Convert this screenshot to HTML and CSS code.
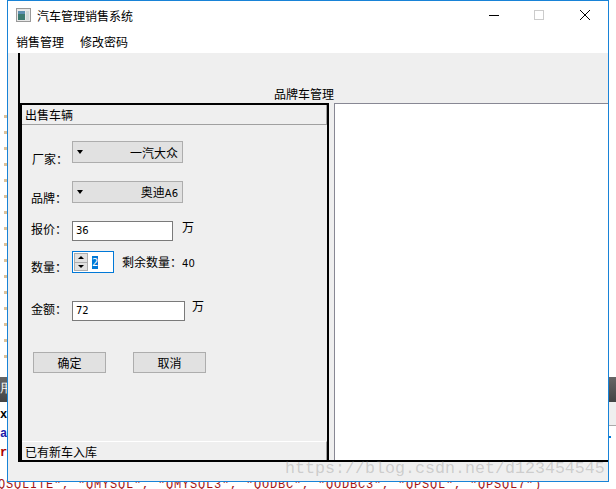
FILE: index.html
```html
<!DOCTYPE html>
<html lang="zh">
<head>
<meta charset="utf-8">
<title>汽车管理销售系统</title>
<link rel="stylesheet" href="styles.css">
</head>
<body>
<div class="desktop">
  <div class="bg-ticks"></div>
  <div class="bg-strip">
    <span class="bg-dark">用</span>
    <span class="bg-x">x</span>
    <span class="bg-blue">a</span>
    <span class="bg-red">r</span>
  </div>
  <div class="bg-code">QSQLITE", "QMYSQL", "QMYSQL3", "QODBC", "QODBC3", "QPSQL", "QPSQL7")</div>
  <div class="bg-right"></div>
  <div class="bg-right-light"></div>
  <div class="bg-dot"></div>
  <div class="window">
    <div class="titlebar">
      <svg class="appicon" width="15" height="15" viewBox="0 0 15 15"><rect x=".5" y=".5" width="14" height="13" fill="#e8e8e8" stroke="#999"/><rect x="2" y="3" width="7" height="9" fill="#3c7a70"/><rect x="2" y="3" width="7" height="3" fill="#5c8fb0"/><rect x="10" y="3" width="3" height="9" fill="#cfd8d8"/></svg>
      <span class="title">汽车管理销售系统</span>
      <div class="winbtns">
        <svg width="12" height="12" viewBox="0 0 12 12" class="wb wb-min"><path d="M1 5.5h10" stroke="#000"/></svg>
        <svg width="12" height="12" viewBox="0 0 12 12" class="wb wb-max"><rect x="1.5" y=".5" width="9" height="9" fill="none" stroke="#ccc"/></svg>
        <svg width="12" height="12" viewBox="0 0 12 12" class="wb"><path d="M1 0l10 10M11 0L1 10" stroke="#000"/></svg>
      </div>
    </div>
    <div class="menubar"><span>销售管理</span><span>修改密码</span></div>
    <div class="client">
      <div class="tabs-head"><span class="tab-label">品牌车管理</span></div>
      <div class="panes">
        <div class="left">
          <div class="group-head">出售车辆</div>
          <div class="form">
            <div class="row row-maker"><span class="lab">厂家：</span><div class="combo"><i class="arrow"></i><span>一汽大众</span></div></div>
            <div class="row row-brand"><span class="lab">品牌：</span><div class="combo"><i class="arrow"></i><span>奥迪<span class="num">A6</span></span></div></div>
            <div class="row row-price"><span class="lab">报价：</span><div class="input w-price">36</div><span class="unit">万</span></div>
            <div class="row row-qty"><span class="lab">数量：</span>
              <div class="spin">
                <div class="spin-btns"><b><i class="up"></i></b><b><i class="down"></i></b></div>
                <span class="sel">2</span>
              </div>
              <span class="remain">剩余数量：<span class="num">40</span></span>
            </div>
            <div class="row row-total"><span class="lab">金额：</span><div class="input w-total">72</div><span class="unit">万</span></div>
            <div class="row row-btns"><div class="btn">确定</div><div class="btn">取消</div></div>
          </div>
          <div class="status">已有新车入库</div>
        </div>
        <div class="right"></div>
      </div>
    </div>
  </div>
  <div class="watermark">https://blog.csdn.net/d123454545</div>
</div>
</body>
</html>
```
FILE: styles.css
```css
* { box-sizing: border-box; }
html, body { margin: 0; padding: 0; }
body { font-family: "Noto Sans CJK SC", "Liberation Sans", sans-serif; font-size: 12px; color: #000; }
.desktop { position: relative; width: 616px; height: 489px; background: #fff; overflow: hidden; }
.bg-ticks { position: absolute; left: 4px; top: 115px; width: 3px; height: 256px; background: repeating-linear-gradient(#dcc29a 0 3px, #fff 3px 16px); }
.bg-strip { position: absolute; left: 0; top: 377px; width: 7px; height: 90px; font-family: "Liberation Mono", monospace; font-size: 12px; }
.bg-strip span { position: absolute; left: 0; width: 7px; overflow: hidden; line-height: 14px; }
.bg-dark { top: 0; height: 25px; background: linear-gradient(#666, #444); color: #fff; line-height: 25px !important; }
.bg-x { top: 31px; font-weight: bold; }
.bg-blue { top: 50px; color: #2222aa; font-weight: bold; }
.bg-red { top: 69px; color: #a00; font-weight: bold; }
.bg-code { position: absolute; left: -2px; top: 479px; font-family: "Liberation Mono", monospace; font-size: 12px; letter-spacing: .8px; line-height: 12px; color: #a31515; white-space: nowrap; }
.bg-right { position: absolute; left: 609px; top: 377px; width: 7px; height: 25px; background: linear-gradient(#666, #444); }
.bg-right-light { position: absolute; left: 609px; top: 402px; width: 7px; height: 24px; background: #efefef; border-bottom: 1px solid #aaa; }
.bg-dot { position: absolute; left: 609px; top: 436px; width: 2px; height: 2px; background: #0078d7; }
.window { position: absolute; left: 7px; top: 0; width: 602px; height: 482px; border: 1px solid #1883d7; background: #efefef; display: flex; flex-direction: column; }
.titlebar { height: 29px; background: #fff; display: flex; align-items: center; padding-left: 8px; flex: none; }
.appicon { flex: none; }
.title { margin-left: 6px; font-size: 12px; }
.winbtns { margin-left: auto; display: flex; gap: 34px; padding-right: 17px; }
.wb-min { margin-right: -1px; }
.menubar { height: 23px; background: #fff; display: flex; gap: 16px; padding: 3px 0 0 8px; flex: none; font-size: 12px; line-height: 17px; }
.client { flex: 1; min-height: 0; padding: 0 0 19px 10px; display: flex; flex-direction: column; position: relative; }
.client::before { content: ""; position: absolute; left: 10px; top: 0; bottom: 19px; width: 2px; background: #000; }
.tabs-head { height: 50px; flex: none; position: relative; }
.tab-label { position: absolute; left: 256px; top: 32px; font-size: 12px; line-height: 17px; }
.panes { flex: 1; min-height: 0; display: flex; border-bottom: 2px solid #000; }
.left { width: 309px; flex: none; margin-left: 2px; border: 2px solid #000; border-bottom: 0; display: flex; flex-direction: column; background: #efefef; }
.right { flex: 1; margin-left: 5px; background: #fff; border-left: 1px solid #888894; border-top: 1px solid #888894; }
.group-head { height: 20px; flex: none; border-bottom: 1px solid #a0a0a0; border-right: 1px solid #a0a0a0; padding-left: 3px; line-height: 20px; font-size: 12px; }
.form { flex: 1; padding-left: 9px; }
.row { display: flex; align-items: flex-start; }
.lab { width: 41px; height: 17px; flex: none; font-size: 12px; line-height: 17px; position: relative; }
.row-maker { height: 22px; margin-top: 16px; }
.row-maker .lab { padding-left: 1px; top: 9px; }
.row-brand { height: 22px; margin-top: 18px; }
.row-brand .lab { top: 8px; }
.row-price { height: 20px; margin-top: 18px; }
.row-price .lab { top: -1px; }
.row-qty { height: 22px; margin-top: 10px; }
.row-qty .lab { top: 7px; }
.row-total { height: 20px; margin-top: 28px; }
.row-total .lab { top: -1px; }
.combo { width: 111px; height: 22px; background: #e1e1e1; border: 1px solid #adadad; display: flex; align-items: center; justify-content: flex-end; padding-right: 4px; position: relative; font-size: 12px; line-height: 17px; }
.arrow { position: absolute; left: 4px; top: 8px; border: 3.5px solid transparent; border-top: 4px solid #000; border-bottom: 0; }
.num { font-family: "DejaVu Sans", sans-serif; font-size: 10px; }
.input { height: 20px; background: #fff; border: 1px solid #7a7a7a; line-height: 18px; padding-left: 3px; font-family: "DejaVu Sans", sans-serif; font-size: 10px; }
.w-price { width: 101px; }
.w-total { width: 113px; }
.unit { margin-left: 9px; font-size: 12px; line-height: 17px; margin-top: -3px; }
.row-total .unit { margin-left: 7px; margin-top: -4px; }
.spin { width: 42px; height: 22px; background: #fff; border: 1px solid #0078d7; display: flex; align-items: center; padding-left: 1px; }
.spin-btns { width: 14px; height: 18px; display: flex; flex-direction: column; flex: none; }
.spin-btns b { flex: 1; background: #e1e1e1; border: 1px solid #adadad; position: relative; display: block; }
.spin-btns b + b { margin-top: -1px; }
.spin-btns i { position: absolute; left: 3px; top: 2px; border: 3px solid transparent; }
.up { border-top: 0 !important; border-bottom: 3px solid #000 !important; }
.down { border-bottom: 0 !important; border-top: 3px solid #000 !important; }
.sel { margin-left: 4px; width: 6px; height: 13px; background: #0078d7; color: #fff; font-family: "DejaVu Sans", sans-serif; font-size: 10px; line-height: 13px; text-align: center; }
.remain { margin-left: 8px; font-size: 12px; line-height: 17px; margin-top: 2px; white-space: nowrap; }
.row-btns { margin-top: 31px; padding-left: 2px; gap: 27px; }
.btn { width: 73px; height: 21px; background: #e1e1e1; border: 1px solid #adadad; text-align: center; font-size: 12px; line-height: 20px; }
.status { height: 19px; flex: none; border-top: 1px solid #fff; border-right: 1px solid #a0a0a0; padding-left: 3px; font-size: 12px; line-height: 19px; }
.watermark { position: absolute; left: 285px; top: 458px; font-family: "Liberation Mono", monospace; font-size: 16.67px; line-height: 22px; color: rgba(120,120,120,.3); white-space: nowrap; }
```
